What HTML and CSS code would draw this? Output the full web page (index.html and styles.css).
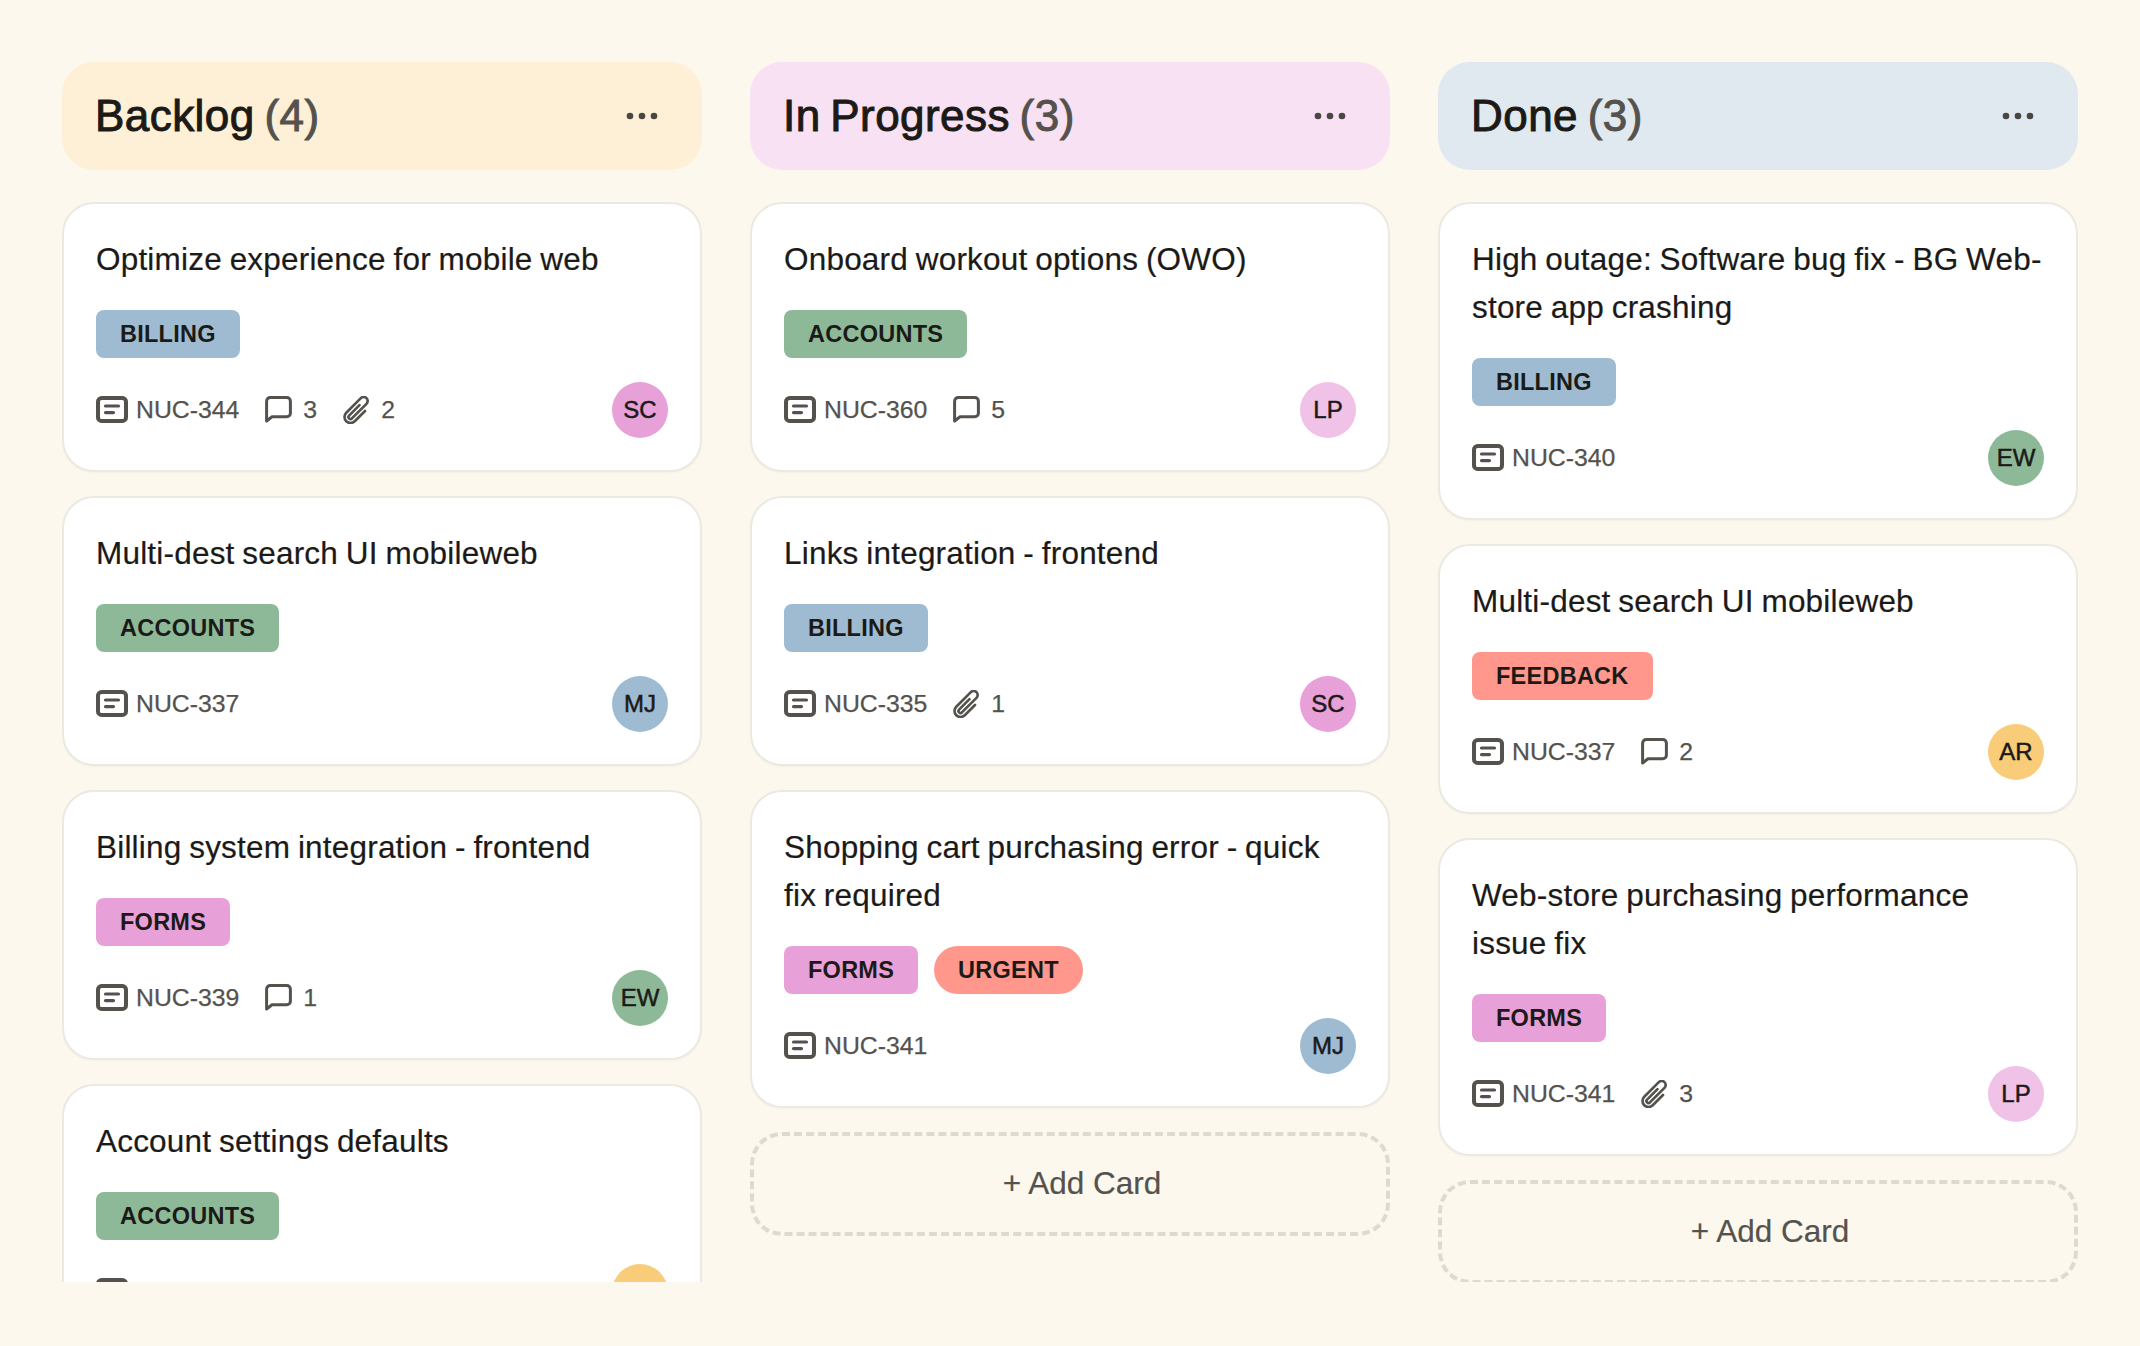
FILE: index.html
```html
<!DOCTYPE html>
<html lang="en">
<head>
<meta charset="utf-8">
<title>Board</title>
<link rel="stylesheet" href="styles.css">
</head>
<body>
<svg class="defs" width="0" height="0" aria-hidden="true">
  <symbol id="i-ticket" viewBox="0 0 32 27">
    <rect x="2" y="2" width="28" height="23" rx="3.600" fill="none" stroke="currentColor" stroke-width="4"/>
    <path d="M9.500 10h13M9.500 16.600h8" fill="none" stroke="currentColor" stroke-width="3.200" stroke-linecap="round"/>
  </symbol>
  <symbol id="i-comment" viewBox="0 0 27 27">
    <path d="M1.600 25V5.200a3.600 3.600 0 0 1 3.600-3.600h16.600a3.600 3.600 0 0 1 3.600 3.600v12a3.600 3.600 0 0 1-3.600 3.600H7z" fill="none" stroke="currentColor" stroke-width="3" stroke-linejoin="round"/>
  </symbol>
  <symbol id="i-clip" viewBox="2 1.500 20 21">
    <path d="M18.375 12.739l-7.693 7.693a4.500 4.500 0 01-6.364-6.364l10.940-10.940A3 3 0 1119.500 7.372L8.552 18.320m5.688-9.941l-7.810 7.810a1.500 1.500 0 002.112 2.130" fill="none" stroke="currentColor" stroke-width="2" stroke-linecap="round" stroke-linejoin="round"/>
  </symbol>
  <symbol id="i-dots" viewBox="0 0 32 8">
    <circle cx="4" cy="4" r="3.300" fill="currentColor"/>
    <circle cx="16" cy="4" r="3.300" fill="currentColor"/>
    <circle cx="28" cy="4" r="3.300" fill="currentColor"/>
  </symbol>
</svg>

<main class="board">

  <section class="column">
    <header class="col-head head-yellow">
      <h2 class="col-title">Backlog <span class="col-count">(4)</span></h2>
      <svg class="dots"><use href="#i-dots"/></svg>
    </header>

    <article class="card">
      <h3 class="card-title">Optimize experience for mobile web</h3>
      <div class="tags"><span class="tag tag-blue">BILLING</span></div>
      <div class="foot">
        <span class="meta meta-id"><svg class="ic-ticket"><use href="#i-ticket"/></svg>NUC-344</span>
        <span class="meta"><svg class="ic-comment"><use href="#i-comment"/></svg>3</span>
        <span class="meta"><svg class="ic-clip"><use href="#i-clip"/></svg>2</span>
        <span class="avatar av-pink">SC</span>
      </div>
    </article>

    <article class="card">
      <h3 class="card-title">Multi-dest search UI mobileweb</h3>
      <div class="tags"><span class="tag tag-green">ACCOUNTS</span></div>
      <div class="foot">
        <span class="meta meta-id"><svg class="ic-ticket"><use href="#i-ticket"/></svg>NUC-337</span>
        <span class="avatar av-blue">MJ</span>
      </div>
    </article>

    <article class="card">
      <h3 class="card-title">Billing system integration - frontend</h3>
      <div class="tags"><span class="tag tag-pink">FORMS</span></div>
      <div class="foot">
        <span class="meta meta-id"><svg class="ic-ticket"><use href="#i-ticket"/></svg>NUC-339</span>
        <span class="meta"><svg class="ic-comment"><use href="#i-comment"/></svg>1</span>
        <span class="avatar av-green">EW</span>
      </div>
    </article>

    <article class="card">
      <h3 class="card-title">Account settings defaults</h3>
      <div class="tags"><span class="tag tag-green">ACCOUNTS</span></div>
      <div class="foot">
        <span class="meta meta-id"><svg class="ic-ticket"><use href="#i-ticket"/></svg></span>
        <span class="avatar av-yellow"></span>
      </div>
    </article>
  </section>

  <section class="column">
    <header class="col-head head-pink">
      <h2 class="col-title">In Progress <span class="col-count">(3)</span></h2>
      <svg class="dots"><use href="#i-dots"/></svg>
    </header>

    <article class="card">
      <h3 class="card-title">Onboard workout options (OWO)</h3>
      <div class="tags"><span class="tag tag-green">ACCOUNTS</span></div>
      <div class="foot">
        <span class="meta meta-id"><svg class="ic-ticket"><use href="#i-ticket"/></svg>NUC-360</span>
        <span class="meta"><svg class="ic-comment"><use href="#i-comment"/></svg>5</span>
        <span class="avatar av-lilac">LP</span>
      </div>
    </article>

    <article class="card">
      <h3 class="card-title">Links integration - frontend</h3>
      <div class="tags"><span class="tag tag-blue">BILLING</span></div>
      <div class="foot">
        <span class="meta meta-id"><svg class="ic-ticket"><use href="#i-ticket"/></svg>NUC-335</span>
        <span class="meta"><svg class="ic-clip"><use href="#i-clip"/></svg>1</span>
        <span class="avatar av-pink">SC</span>
      </div>
    </article>

    <article class="card">
      <h3 class="card-title">Shopping cart purchasing error - quick fix required</h3>
      <div class="tags"><span class="tag tag-pink">FORMS</span><span class="tag tag-red tag-pill">URGENT</span></div>
      <div class="foot">
        <span class="meta meta-id"><svg class="ic-ticket"><use href="#i-ticket"/></svg>NUC-341</span>
        <span class="avatar av-blue">MJ</span>
      </div>
    </article>

    <button class="add-card" type="button">+ Add Card</button>
  </section>

  <section class="column">
    <header class="col-head head-blue">
      <h2 class="col-title">Done <span class="col-count">(3)</span></h2>
      <svg class="dots"><use href="#i-dots"/></svg>
    </header>

    <article class="card">
      <h3 class="card-title">High outage: Software bug fix - BG Web-store app crashing</h3>
      <div class="tags"><span class="tag tag-blue">BILLING</span></div>
      <div class="foot">
        <span class="meta meta-id"><svg class="ic-ticket"><use href="#i-ticket"/></svg>NUC-340</span>
        <span class="avatar av-green">EW</span>
      </div>
    </article>

    <article class="card">
      <h3 class="card-title">Multi-dest search UI mobileweb</h3>
      <div class="tags"><span class="tag tag-red">FEEDBACK</span></div>
      <div class="foot">
        <span class="meta meta-id"><svg class="ic-ticket"><use href="#i-ticket"/></svg>NUC-337</span>
        <span class="meta"><svg class="ic-comment"><use href="#i-comment"/></svg>2</span>
        <span class="avatar av-yellow">AR</span>
      </div>
    </article>

    <article class="card">
      <h3 class="card-title">Web-store purchasing performance issue fix</h3>
      <div class="tags"><span class="tag tag-pink">FORMS</span></div>
      <div class="foot">
        <span class="meta meta-id"><svg class="ic-ticket"><use href="#i-ticket"/></svg>NUC-341</span>
        <span class="meta"><svg class="ic-clip"><use href="#i-clip"/></svg>3</span>
        <span class="avatar av-lilac">LP</span>
      </div>
    </article>

    <button class="add-card" type="button">+ Add Card</button>
  </section>

</main>
</body>
</html>
```

FILE: styles.css
```css
* { box-sizing: border-box; }

html, body { margin: 0; height: 100%; }

body {
  background: #fdf8ee;
  color: #1c1a17;
  font-family: "Liberation Sans", Arial, sans-serif;
  padding: 62px 62px 64px;
  overflow: hidden;
}

.defs { position: absolute; }

.board {
  display: grid;
  grid-template-columns: repeat(3, 640px);
  column-gap: 48px;
  height: 1220px;
  overflow: hidden;
  align-items: start;
}

.column {
  display: flex;
  flex-direction: column;
  gap: 24px;
}

.col-head {
  display: flex;
  align-items: center;
  justify-content: space-between;
  height: 108px;
  margin-bottom: 8px;
  padding: 0 44px 0 33px;
  border-radius: 32px;
}
.head-yellow { background: #fdf0d6; }
.head-pink { background: #f7e1f3; }
.head-blue { background: #e1e9f0; }

.col-title {
  margin: 0;
  font-size: 44px;
  font-weight: 400;
  letter-spacing: 0.45px;
  word-spacing: -3px;
  line-height: 56px;
  -webkit-text-stroke: 1px currentColor;
}
.col-count { color: #55524e; }

.dots { width: 32px; height: 8px; color: #4a4743; }

.card {
  flex: none;
  background: #fff;
  border: 2px solid #ece9e3;
  border-radius: 32px;
  padding: 31px 32px 33px;
  box-shadow: 0 1px 2px rgba(60, 50, 30, 0.04);
}

.card-title {
  margin: 0;
  font-size: 31.500px;
  font-weight: 400;
  letter-spacing: 0.2px;
  word-spacing: -1.200px;
  line-height: 48px;
  color: #1c1a17;
  -webkit-text-stroke: 0.2px currentColor;
}

.tags {
  display: flex;
  gap: 16px;
  margin-top: 27px;
}

.tag {
  display: block;
  height: 48px;
  padding: 0 24px;
  border-radius: 8px;
  font-size: 23.500px;
  font-weight: 700;
  letter-spacing: 0.25px;
  line-height: 48px;
  color: #1c1a17;
}
.tag-pill { border-radius: 24px; }
.tag-blue { background: #9fbbd2; }
.tag-green { background: #8db998; }
.tag-pink { background: #e8a0d8; }
.tag-red { background: #ff978c; }

.foot {
  display: flex;
  align-items: center;
  gap: 26px;
  height: 55px;
  margin-top: 24px;
  font-size: 24.800px;
  color: #55524e;
  -webkit-text-stroke: 0.25px currentColor;
}

.meta {
  display: flex;
  align-items: center;
  gap: 11px;
}
.meta-id { gap: 8px; }

.ic-ticket { width: 32px; height: 27px; }
.ic-comment { width: 27px; height: 27px; }
.ic-clip { width: 27px; height: 28px; }

.avatar {
  flex: none;
  width: 56px;
  height: 56px;
  margin-left: auto;
  border-radius: 50%;
  display: flex;
  align-items: center;
  justify-content: center;
  font-size: 24px;
  color: #1c1a17;
  -webkit-text-stroke: 0.5px currentColor;
}
.av-pink { background: #e8a0d8; }
.av-lilac { background: #f0c2e8; }
.av-blue { background: #9fbbd2; }
.av-green { background: #8db998; }
.av-yellow { background: #f9cc7a; }

.add-card {
  flex: none;
  height: 104px;
  padding: 0 0 2px 24px;
  background: transparent;
  border: 4px dashed #dedad2;
  border-radius: 32px;
  font-family: inherit;
  font-size: 31.500px;
  color: #55524e;
  -webkit-text-stroke: 0.2px currentColor;
}
```
